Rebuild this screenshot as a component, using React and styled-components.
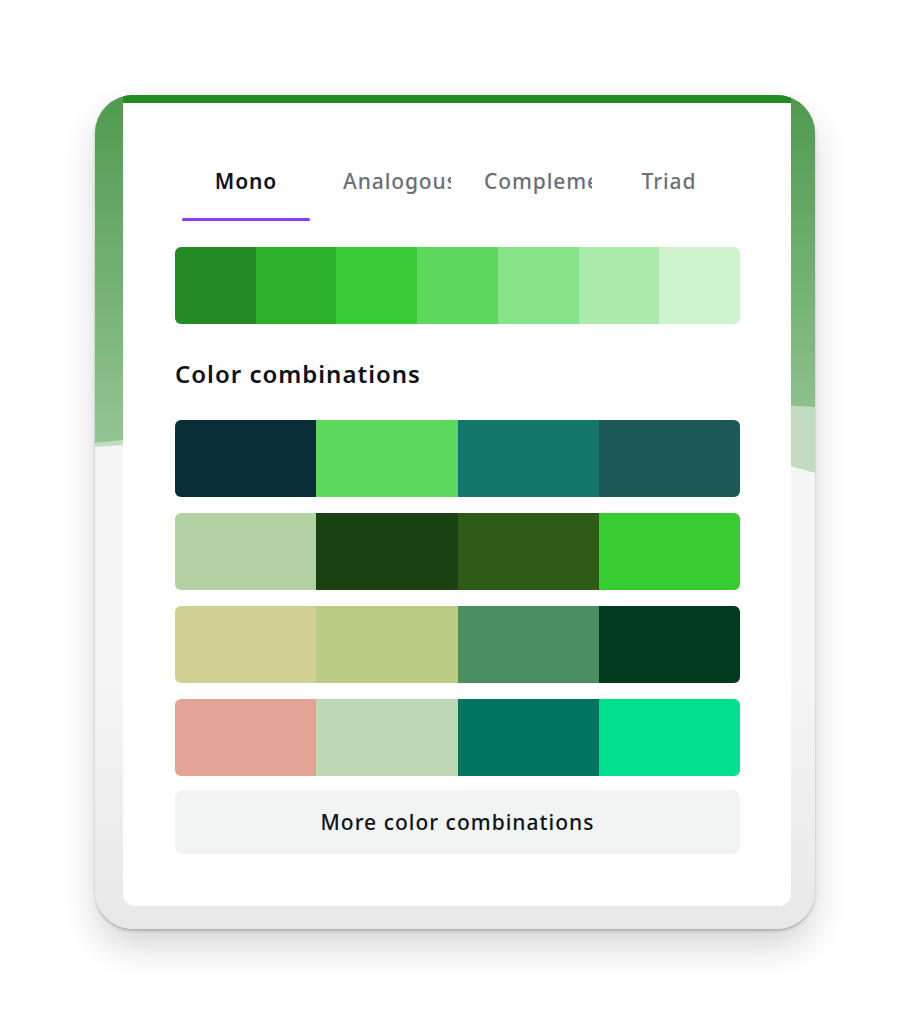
import React from "react"
import styled, { createGlobalStyle } from "styled-components"

const GlobalStyle = createGlobalStyle`
  body {
    margin: 0;
    background: #ffffff;
    font-family: "Noto Sans", "Open Sans", sans-serif;
  }
`

const Page = styled.div`
  width: 910px;
  height: 1024px;
  padding-top: 95px;
  box-sizing: border-box;
`

const Frame = styled.div`
  position: relative;
  width: 720px;
  margin: 0 auto;
  padding: 0 24px 23px 28px;
  box-sizing: border-box;
  border-radius: 38px;
  overflow: hidden;
  background: linear-gradient(to bottom, #f4f5f4 70%, #e8e8e8 100%);
  box-shadow: 0 2px 3px rgba(0, 0, 0, 0.22), 0 18px 34px rgba(0, 0, 0, 0.16);
`

const Backdrop = styled.svg`
  position: absolute;
  top: 0;
  left: 0;
  width: 100%;
  height: 420px;
`

const Panel = styled.div`
  position: relative;
  background: #ffffff;
  border-top: 8px solid #228b22;
  border-radius: 0 0 12px 12px;
  padding: 54px 51px 52px 52px;
`

const Tabs = styled.div`
  display: flex;
  justify-content: center;
  gap: 13px;
`

const Tab = styled.div`
  width: 128px;
  display: flex;
  flex-direction: column;
  align-items: stretch;
`

const TabLabel = styled.div`
  padding: 0 20px;
  height: 48px;
  line-height: 48px;
  font-size: 21px;
  letter-spacing: 0.9px;
  font-weight: ${p => (p.$active ? 600 : 500)};
  color: ${p => (p.$active ? "#0e1318" : "#6b7076")};
  text-align: center;
  white-space: nowrap;
  overflow: hidden;
`

const Indicator = styled.div`
  margin-top: 13px;
  height: 3px;
  border-radius: 2px;
  background: ${p => (p.$active ? "#8b3dff" : "transparent")};
`

const Strip = styled.div`
  display: flex;
  height: 77px;
  margin-top: 26px;
  border-radius: 6px;
  overflow: hidden;
`

const Swatch = styled.div`
  flex: 1;
  background: ${p => p.$color};
`

const Heading = styled.h2`
  margin: 34px 0 30px;
  font-size: 24px;
  line-height: 32px;
  letter-spacing: 1px;
  font-weight: 600;
  color: #0e1318;
`

const Combos = styled.div`
  display: flex;
  flex-direction: column;
  gap: 16px;
`

const Combo = styled.div`
  display: flex;
  height: 77px;
  border-radius: 6px;
  overflow: hidden;
  box-shadow: inset 0 0 0 1px rgba(0, 0, 0, 0.04);
`

const MoreButton = styled.button`
  display: block;
  width: 100%;
  height: 64px;
  margin-top: 14px;
  border: none;
  border-radius: 8px;
  background: #f2f3f3;
  font-family: "Noto Sans", "Open Sans", sans-serif;
  font-size: 21px;
  letter-spacing: 1px;
  font-weight: 500;
  color: #0e1318;
`

const tabs = ["Mono", "Analogous", "Complementary", "Triad"]

const mono = ["#258a25", "#2cb02c", "#38cc38", "#5dd85d", "#87e387", "#aaeaaa", "#cff3cf"]

const combos = [
  ["#0a2f38", "#5dd95d", "#13776a", "#1b5856"],
  ["#b3d1a3", "#1a4313", "#2e5c18", "#37cd32"],
  ["#ced193", "#bacc83", "#4a8d60", "#023a1d"],
  ["#e3a496", "#c1d8b6", "#027560", "#00e08e"],
]

const App = () => {
  return (
    <Page>
      <GlobalStyle />
      <Frame>
        <Backdrop viewBox="0 0 720 420" preserveAspectRatio="none">
          <defs>
            <linearGradient id="greenFade" x1="0" y1="0" x2="0" y2="1">
              <stop offset="0" stopColor="#4f9a4f" />
              <stop offset="1" stopColor="#93c593" />
            </linearGradient>
          </defs>
          <path d="M0 0 H720 V378 C560 330 300 330 0 352 Z" fill="#c2dcc2" />
          <path d="M0 0 H720 V312 C520 300 260 320 0 348 Z" fill="url(#greenFade)" />
        </Backdrop>
        <Panel>
          <Tabs>
            {tabs.map((t, i) => (
              <Tab key={t}>
                <TabLabel $active={i === 0}>{t}</TabLabel>
                <Indicator $active={i === 0} />
              </Tab>
            ))}
          </Tabs>
          <Strip>
            {mono.map(c => (
              <Swatch key={c} $color={c} />
            ))}
          </Strip>
          <Heading>Color combinations</Heading>
          <Combos>
            {combos.map((row, i) => (
              <Combo key={i}>
                {row.map(c => (
                  <Swatch key={c} $color={c} />
                ))}
              </Combo>
            ))}
          </Combos>
          <MoreButton>More color combinations</MoreButton>
        </Panel>
      </Frame>
    </Page>
  )
}

export default App
